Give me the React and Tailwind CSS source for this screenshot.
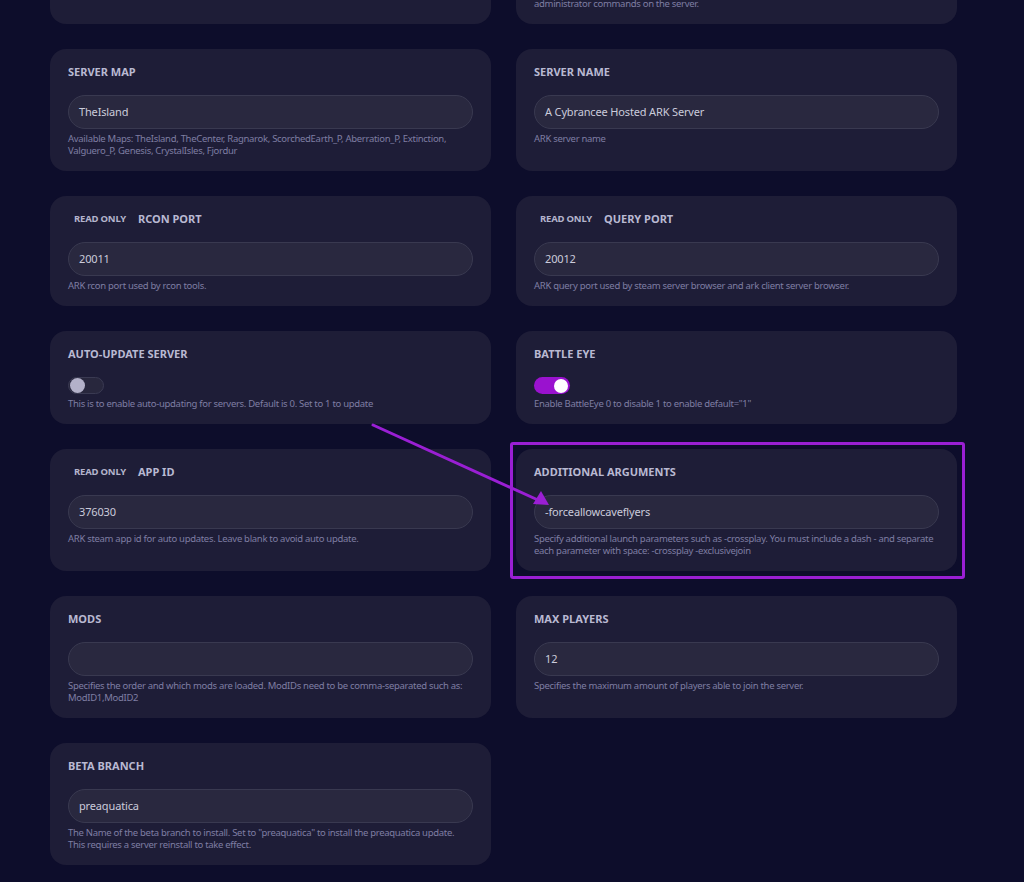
import React from "react";

const FONT = "font-['Noto_Sans',sans-serif]";

function Field({ label, readOnly, value, help, toggle, highlight }) {
  return (
    <div className="relative rounded-[16px] bg-[#1e1d37] px-[18px] pt-[15px] pb-[14px]">
      {highlight && (
        <div className="pointer-events-none absolute -top-[7px] -bottom-[8px] -left-[6px] -right-[8px] rounded-[3px] border-[3px] border-[#9a1fd4]" />
      )}
      <div className="flex h-4 items-center gap-[6px]">
        {readOnly && (
          <span className="px-[6px] text-[9.5px] font-bold tracking-[-0.2px] text-[#b4b4cc]">READ ONLY</span>
        )}
        <span className="text-[11px] font-bold text-[#b9b9d2]">{label}</span>
      </div>

      {toggle === undefined ? (
        <div className="mt-[15px] flex h-[34px] items-center rounded-full border border-[#393950] bg-[#29283f] px-[10px] text-[11px] tracking-[-0.15px] text-[#cbcbdb]">
          {value}
        </div>
      ) : toggle ? (
        <div className="mt-[15px] flex h-[17px] w-[36px] items-center justify-end rounded-full bg-[#9a12cf] px-[2px]">
          <div className="h-[14px] w-[14px] rounded-full bg-white" />
        </div>
      ) : (
        <div className="mt-[15px] flex h-[17px] w-[36px] items-center rounded-full border border-[#3a3a52] bg-[#28273d] px-[1px]">
          <div className="h-[15px] w-[15px] rounded-full bg-[#b3b1c9]" />
        </div>
      )}

      <p className="mt-[4px] text-[9.5px] leading-[12px] tracking-[-0.3px] text-[#7f7ea3]">{help}</p>
    </div>
  );
}

export default function App() {
  return (
    <div className={`relative min-h-[882px] overflow-hidden bg-[#0d0d2b] ${FONT}`}>
      <div className="ml-[50px] mt-[-98px] grid w-[907px] grid-cols-2 gap-[25px] pb-[18px]">
        <Field
          label="SERVER PASSWORD"
          value=""
          help="Password required to join the server. Leave blank for a public server."
        />
        <Field
          label="ADMIN PASSWORD"
          value="••••••••"
          help={
            <>
              Password used to access the admin panel and to use
              <br />
              administrator commands on the server.
            </>
          }
        />

        <Field
          label="SERVER MAP"
          value="TheIsland"
          help="Available Maps: TheIsland, TheCenter, Ragnarok, ScorchedEarth_P, Aberration_P, Extinction, Valguero_P, Genesis, CrystalIsles, Fjordur"
        />
        <Field label="SERVER NAME" value="A Cybrancee Hosted ARK Server" help="ARK server name" />

        <Field readOnly label="RCON PORT" value="20011" help="ARK rcon port used by rcon tools." />
        <Field
          readOnly
          label="QUERY PORT"
          value="20012"
          help="ARK query port used by steam server browser and ark client server browser."
        />

        <Field
          label="AUTO-UPDATE SERVER"
          toggle={false}
          help="This is to enable auto-updating for servers. Default is 0. Set to 1 to update"
        />
        <Field label="BATTLE EYE" toggle={true} help={'Enable BattleEye 0 to disable 1 to enable default="1"'} />

        <Field
          readOnly
          label="APP ID"
          value="376030"
          help="ARK steam app id for auto updates. Leave blank to avoid auto update."
        />
        <Field
          highlight
          label="ADDITIONAL ARGUMENTS"
          value="-forceallowcaveflyers"
          help="Specify additional launch parameters such as -crossplay. You must include a dash - and separate each parameter with space: -crossplay -exclusivejoin"
        />

        <Field
          label="MODS"
          value=""
          help="Specifies the order and which mods are loaded. ModIDs need to be comma-separated such as: ModID1,ModID2"
        />
        <Field label="MAX PLAYERS" value="12" help="Specifies the maximum amount of players able to join the server." />

        <Field
          label="BETA BRANCH"
          value="preaquatica"
          help={'The Name of the beta branch to install. Set to "preaquatica" to install the preaquatica update. This requires a server reinstall to take effect.'}
        />
      </div>

      {/* annotation arrow */}
      <svg className="pointer-events-none absolute left-0 top-0" width="1024" height="882">
        <line x1="373" y1="425" x2="538" y2="500" stroke="#9a1fd4" strokeWidth="3" strokeLinecap="round" />
        <polygon points="549,505 533,504 541,491" fill="#9a1fd4" />
      </svg>
    </div>
  );
}
